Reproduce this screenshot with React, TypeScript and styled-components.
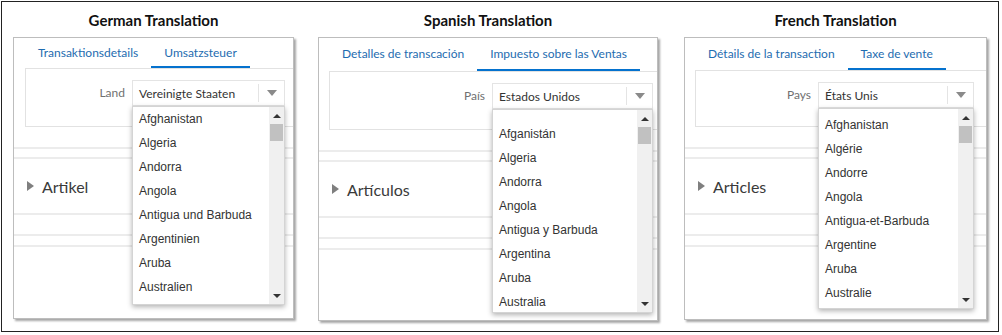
import React from "react"
import styled, { createGlobalStyle } from "styled-components"

const GlobalStyle = createGlobalStyle`
  body {
    margin: 0;
    background: #fff;
  }
`

const UI_FONT = `Lato, "Open Sans", sans-serif`
const LIST_FONT = `"Liberation Sans", Arial, sans-serif`

const Frame = styled.div`
  box-sizing: border-box;
  width: 998px;
  height: 331px;
  margin: 1px 0 0 1px;
  border: 1px solid #222;
  display: flex;
  gap: 24px;
  padding: 8px 0 0 11px;
`

const Column = styled.div<{ $w: number; $lead?: number }>`
  display: flex;
  flex-direction: column;
  width: ${({ $w }) => $w}px;
  margin-left: ${({ $lead }) => $lead || 0}px;
`

const Title = styled.div`
  font-family: ${UI_FONT};
  font-weight: 700;
  font-size: 15px;
  line-height: 20px;
  text-align: center;
  color: #111;
  margin-bottom: 7px;
`

const Panel = styled.div<{ $h: number }>`
  position: relative;
  box-sizing: border-box;
  height: ${({ $h }) => $h}px;
  border: 1px solid #bdbdbd;
  box-shadow: 2px 2px 2px rgba(0, 0, 0, 0.35);
  background: #fff;
`

const TabBar = styled.div<{ $h: number; $pad: number }>`
  display: flex;
  box-sizing: border-box;
  height: ${({ $h }) => $h}px;
  padding-left: ${({ $pad }) => $pad}px;
`

const Tab = styled.div<{ $active?: boolean }>`
  display: flex;
  align-items: center;
  padding: 0 13px;
  font-family: ${UI_FONT};
  font-size: 12px;
  color: #1e6cb0;
  border-bottom: 2px solid ${({ $active }) => ($active ? "#0572ce" : "transparent")};
  white-space: nowrap;
`

const FormBox = styled.div<{ $left: number; $h: number }>`
  display: flex;
  align-items: flex-start;
  box-sizing: border-box;
  height: ${({ $h }) => $h}px;
  margin-left: ${({ $left }) => $left}px;
  padding-top: 11px;
  border: 1px solid #e2e2e2;
  border-right: none;
`

const Label = styled.div<{ $w: number }>`
  box-sizing: border-box;
  width: ${({ $w }) => $w}px;
  padding-right: 7px;
  text-align: right;
  line-height: 26px;
  font-family: ${UI_FONT};
  font-size: 12px;
  color: #707070;
`

const SelectWrap = styled.div<{ $w: number }>`
  position: relative;
  width: ${({ $w }) => $w}px;
`

const SelectBox = styled.div`
  display: flex;
  align-items: center;
  box-sizing: border-box;
  height: 26px;
  border: 1px solid #e4e4e4;
`

const SelectValue = styled.div`
  flex: 1;
  padding-left: 6px;
  font-family: ${UI_FONT};
  font-size: 12px;
  color: #333;
  white-space: nowrap;
`

const Caret = styled.div`
  display: flex;
  align-items: center;
  justify-content: center;
  width: 25px;
  height: 18px;
  border-left: 1px solid #e4e4e4;

  &::after {
    content: "";
    border-top: 6px solid #8a8a8a;
    border-left: 5px solid transparent;
    border-right: 5px solid transparent;
  }
`

const Dropdown = styled.div<{ $h: number }>`
  position: absolute;
  top: 100%;
  left: 0;
  z-index: 2;
  display: flex;
  box-sizing: border-box;
  width: 100%;
  height: ${({ $h }) => $h}px;
  background: #fff;
  border: 1px solid #d4d4d4;
  box-shadow: 0 2px 5px rgba(0, 0, 0, 0.3);
`

const Options = styled.div<{ $pt: number }>`
  flex: 1;
  overflow: hidden;
  padding-top: ${({ $pt }) => $pt}px;
`

const Option = styled.div`
  height: 24px;
  line-height: 24px;
  padding-left: 6px;
  font-family: ${LIST_FONT};
  font-size: 12px;
  color: #333;
  white-space: nowrap;
`

const ScrollBar = styled.div`
  display: flex;
  flex-direction: column;
  align-items: center;
  width: 15px;
  background: #f0f0f0;
`

const ScrollArrow = styled.div<{ $down?: boolean }>`
  display: flex;
  align-items: center;
  justify-content: center;
  height: 17px;
  width: 100%;

  &::after {
    content: "";
    border-left: 4px solid transparent;
    border-right: 4px solid transparent;
    ${({ $down }) => ($down ? "border-top: 4px solid #333;" : "border-bottom: 4px solid #333;")}
  }
`

const Thumb = styled.div`
  width: 13px;
  height: 17px;
  background: #c1c1c1;
`

const Track = styled.div`
  flex: 1;
`

const Rule = styled.div<{ $mt: number }>`
  height: 2px;
  margin-top: ${({ $mt }) => $mt}px;
  background: #ececec;
`

const Section = styled.div`
  display: flex;
  align-items: center;
  gap: 8px;
  height: 54px;
  padding-left: 13px;
  font-family: ${UI_FONT};
  font-size: 16px;
  color: #3a3a3a;

  &::before {
    content: "";
    border-left: 7px solid #7f7f7f;
    border-top: 5px solid transparent;
    border-bottom: 5px solid transparent;
  }
`

type Layout = {
  colW: number
  lead?: number
  panelH: number
  tabH: number
  tabPad: number
  boxLeft: number
  boxH: number
  labelW: number
  selectW: number
  listH: number
  listPt: number
}

type Translation = {
  title: string
  tabs: [string, string]
  label: string
  value: string
  items: string[]
  section: string
  layout: Layout
}

const translations: Translation[] = [
  {
    title: "German Translation",
    tabs: ["Transaktionsdetails", "Umsatzsteuer"],
    label: "Land",
    value: "Vereinigte Staaten",
    items: ["Afghanistan", "Algeria", "Andorra", "Angola", "Antigua und Barbuda", "Argentinien", "Aruba", "Australien"],
    section: "Artikel",
    layout: { colW: 281, panelH: 282, tabH: 30, tabPad: 11, boxLeft: 11, boxH: 59, labelW: 106, selectW: 153, listH: 199, listPt: 0 },
  },
  {
    title: "Spanish Translation",
    tabs: ["Detalles de transcación", "Impuesto sobre las Ventas"],
    label: "País",
    value: "Estados Unidos",
    items: ["Afganistán", "Algeria", "Andorra", "Angola", "Antigua y Barbuda", "Argentina", "Aruba", "Australia"],
    section: "Artículos",
    layout: { colW: 340, panelH: 284, tabH: 33, tabPad: 10, boxLeft: 10, boxH: 59, labelW: 162, selectW: 161, listH: 204, listPt: 12 },
  },
  {
    title: "French Translation",
    tabs: ["Détails de la transaction", "Taxe de vente"],
    label: "Pays",
    value: "États Unis",
    items: ["Afghanistan", "Algérie", "Andorre", "Angola", "Antigua-et-Barbuda", "Argentine", "Aruba", "Australie"],
    section: "Articles",
    layout: { colW: 303, lead: 2, panelH: 283, tabH: 32, tabPad: 10, boxLeft: 10, boxH: 57, labelW: 122, selectW: 156, listH: 201, listPt: 4 },
  },
]

const TranslationPanel: React.FC<{ t: Translation }> = ({ t }) => {
  const l = t.layout
  return (
    <Column $w={l.colW} $lead={l.lead}>
      <Title>{t.title}</Title>
      <Panel $h={l.panelH}>
        <TabBar $h={l.tabH} $pad={l.tabPad}>
          <Tab>{t.tabs[0]}</Tab>
          <Tab $active>{t.tabs[1]}</Tab>
        </TabBar>
        <FormBox $left={l.boxLeft} $h={l.boxH}>
          <Label $w={l.labelW}>{t.label}</Label>
          <SelectWrap $w={l.selectW}>
            <SelectBox>
              <SelectValue>{t.value}</SelectValue>
              <Caret />
            </SelectBox>
            <Dropdown $h={l.listH}>
              <Options $pt={l.listPt}>
                {t.items.map((item) => (
                  <Option key={item}>{item}</Option>
                ))}
              </Options>
              <ScrollBar>
                <ScrollArrow />
                <Thumb />
                <Track />
                <ScrollArrow $down />
              </ScrollBar>
            </Dropdown>
          </SelectWrap>
        </FormBox>
        <Rule $mt={20} />
        <Rule $mt={8} />
        <Section>{t.section}</Section>
        <Rule $mt={0} />
        <Rule $mt={19} />
        <Rule $mt={9} />
      </Panel>
    </Column>
  )
}

export default function App() {
  return (
    <>
      <GlobalStyle />
      <Frame>
        {translations.map((t) => (
          <TranslationPanel key={t.title} t={t} />
        ))}
      </Frame>
    </>
  )
}
